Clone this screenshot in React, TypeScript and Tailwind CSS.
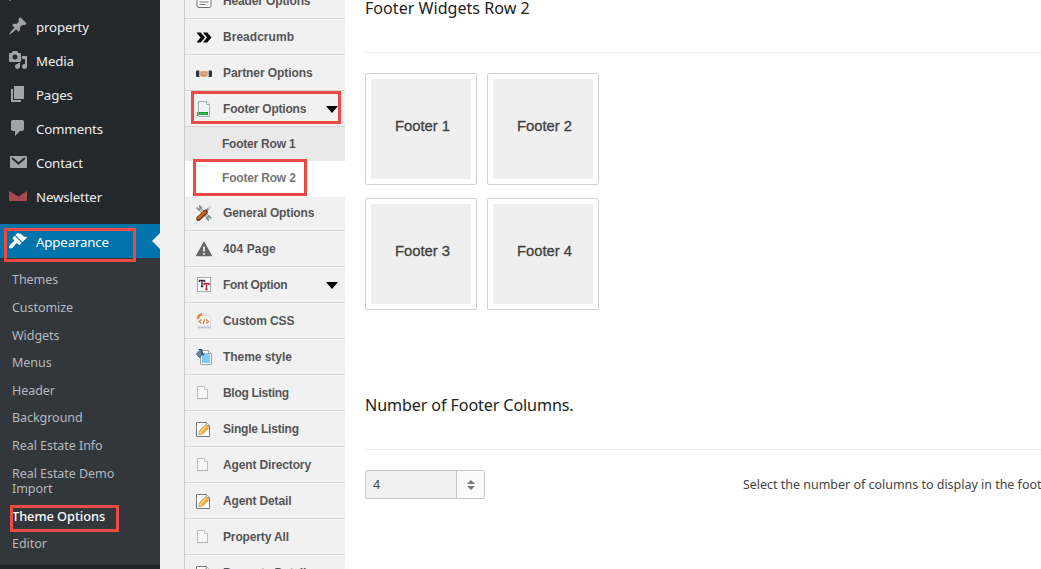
import React from "react";

type IconProps = { children: React.ReactNode; size?: number };

function Glyph({ children, size = 20 }: IconProps) {
  return (
    <svg width={size} height={size} viewBox={`0 0 ${size} ${size}`} className="block shrink-0">
      {children}
    </svg>
  );
}

const PinIcon = () => (
  <Glyph>
    <path fill="#a0a5aa" d="M10.440 3.020l1.820-1.820 6.360 6.350-1.830 1.820c-1.050-.68-2.480-.57-3.410.36l-.75.75c-.92.930-1.040 2.350-.35 3.410l-1.830 1.820-2.410-2.410-2.800 2.790c-.42.420-3.380 2.710-3.800 2.290s1.860-3.390 2.280-3.810l2.790-2.790L4.100 9.360l1.830-1.820c1.050.690 2.480.570 3.400-.36l.75-.75c.930-.92 1.050-2.350.36-3.410z" />
  </Glyph>
);
const MediaIcon = () => (
  <Glyph>
    <path fill="#a0a5aa" fillRule="evenodd" d="M13 11V4c0-.55-.45-1-1-1h-1.670L9 1H5L3.670 3H2c-.55 0-1 .45-1 1v7c0 .55.45 1 1 1h10c.55 0 1-.45 1-1zM7 4.500c1.380 0 2.500 1.120 2.500 2.500S8.380 9.500 7 9.500 4.500 8.380 4.500 7 5.620 4.500 7 4.500zM14 6h5v10.500c0 1.380-1.120 2.500-2.500 2.500S14 17.880 14 16.500s1.120-2.500 2.500-2.500c.17 0 .34.020.5.050V9h-3V6zm-4 8.050V13h2v3.500c0 1.380-1.120 2.500-2.500 2.500S7 17.880 7 16.500 8.120 14 9.500 14c.17 0 .34.020.5.050z" />
  </Glyph>
);
const PagesIcon = () => (
  <Glyph>
    <path fill="#a0a5aa" d="M6 15V2h10v13H6zm-1 1h8v2H3V5h2v11z" />
  </Glyph>
);
const CommentIcon = () => (
  <Glyph>
    <path fill="#a0a5aa" d="M5 2h9c1.100 0 2 .9 2 2v7c0 1.100-.9 2-2 2h-2l-5 5v-5H5c-1.100 0-2-.9-2-2V4c0-1.100.9-2 2-2z" />
  </Glyph>
);
const MailIcon = () => (
  <Glyph>
    <rect x="2" y="4" width="17" height="12" rx="1" fill="#a0a5aa" />
    <path d="M4 6l6.500 5.500L17 6" fill="none" stroke="#23282d" strokeWidth="2" />
  </Glyph>
);
const NewsletterIcon = () => (
  <Glyph>
    <path fill="#a9484c" d="M1 5l9.500 5.500L19 5v10H1z" />
  </Glyph>
);
const BrushIcon = () => (
  <Glyph>
    <path fill="#fff" d="M14.480 11.060L7.410 3.990l1.500-1.500c.5-.56 2.300-.47 3.510.32 1.210.8 1.430 1.280 2.910 2.100 1.180.640 2.450 1.260 4.450.850zm-.71.710L6.700 4.700 4.930 6.470c-.39.390-.39 1.020 0 1.410l1.060 1.060c.39.390.39 1.030 0 1.420-.6.600-1.430 1.110-2.210 1.690-.35.260-.7.530-1.010.840C1.430 14.230.4 16.080 1.400 17.070c.990 1 2.840-.03 4.180-1.360.310-.31.580-.66.850-1.020.570-.78 1.080-1.610 1.690-2.210.390-.39 1.020-.39 1.410 0l1.060 1.060c.390.390 1.020.390 1.410 0z" />
  </Glyph>
);

const HeaderIcon = () => (
  <Glyph size={16}>
    <rect x="1" y="0.500" width="14" height="14" rx="2" fill="#fafafa" stroke="#707070" />
    <path d="M3.500 4h9M3.500 6.500h9M3.500 9h9M3.500 11.500h6" stroke="#777" />
  </Glyph>
);
const ChevronsIcon = () => (
  <Glyph size={16}>
    <path fill="#080808" d="M.5 3.500h4.200L9 8.500l-4.300 5H.5l4-5zM7 3.500h4.200l4.300 5-4.300 5H7l4-5z" />
  </Glyph>
);
const HandshakeIcon = () => (
  <Glyph size={16}>
    <rect x="0" y="5.500" width="3.500" height="6.500" rx="1" fill="#30343a" />
    <rect x="12.500" y="5.500" width="3.500" height="6.500" rx="1" fill="#30343a" />
    <path fill="#aeb5bc" d="M3 6h1.500v5.500H3zM11.500 6H13v5.500h-1.500z" />
    <path fill="#d99a68" d="M4.500 6.500l3-.5 4 .5V11L9 12H7l-2.500-1z" />
    <path d="M6 8l3 .3 2 1.500" stroke="#f0bd93" fill="none" />
  </Glyph>
);
const FooterIcon = () => (
  <Glyph size={16}>
    <path fill="#edf4f3" stroke="#a3b1af" d="M2.500.5h8l3 3v12h-11z" />
    <path fill="#fff" stroke="#a3b1af" d="M10.500.5v3h3" />
    <rect x="3.500" y="11.500" width="8" height="2" fill="#46c653" stroke="#179c2b" />
    <path d="M1.500 11v4" stroke="#2baa3a" />
  </Glyph>
);
const ToolsIcon = () => (
  <Glyph size={16}>
    <path d="M3 3l10 10" stroke="#819292" strokeWidth="3.400" />
    <path d="M3 3l10 10" stroke="#c9d4d3" strokeWidth="1.800" />
    <path d="M.8 2.500L3 5 5.300 2.800 3 .6M15.200 13.500L13 11l-2.300 2.200L13 15.400" fill="none" stroke="#819292" strokeWidth="1.800" />
    <path d="M14.500 1.500L8 8" stroke="#8a9696" strokeWidth="2.200" />
    <path d="M14.800 1.200L12.500 3.500" stroke="#dce5e5" strokeWidth="1.800" />
    <path d="M9.500 7L2.500 13.700" stroke="#74320e" strokeWidth="4.500" strokeLinecap="round" />
    <path d="M9 7L2.500 13.200" stroke="#cf6727" strokeWidth="2.400" strokeLinecap="round" />
  </Glyph>
);
const WarningIcon = () => (
  <Glyph size={16}>
    <path fill="#666" stroke="#666" strokeWidth="1.500" strokeLinejoin="round" d="M8 1.500l7.200 13H.8z" />
    <path d="M8 5.500v5M8 12v1.800" stroke="#eee" strokeWidth="1.800" />
  </Glyph>
);
const FontIcon = () => (
  <Glyph size={16}>
    <rect x="1.500" y="0.500" width="13" height="14" fill="#fff" stroke="#aaa" />
    <path d="M3 3.500h6M3.500 3v2M8.500 3v2M6 3v7M4.800 9.500h2.400" stroke="#333" strokeWidth="1.400" fill="none" />
    <path d="M7.500 6.500h6M8 6v2M13 6v2M10.500 6v7M9.200 12.500h2.600" stroke="#bf2436" strokeWidth="1.400" fill="none" />
  </Glyph>
);
const CssIcon = () => (
  <Glyph size={16}>
    <path fill="#dedee6" d="M1.500 2H12l3 2.500v10H1.500z" />
    <path fill="#f8f8fa" d="M2 3h9.500L14 5v7.500H2z" />
    <path d="M2 14.800h12.500" stroke="#b4b4c0" />
    <path fill="#e5842a" d="M.5 5.500C1 2.500 3.500 0 6.500.2L5.500 2.800C3.800 3 3.500 4.500 3.200 6z" />
    <path d="M5.500 6.500l-2.500 2 2.500 2M10 6.500l2.500 2-2.500 2M8.600 6.300l-1.500 4.400" stroke="#e8792c" strokeWidth="1.200" fill="none" />
  </Glyph>
);
const StyleIcon = () => (
  <Glyph size={16}>
    <path fill="#f5fafe" stroke="#9ba3aa" d="M4.500 1.500h8l3 3v11h-11z" />
    <path fill="#83c8f7" d="M6 4h6l2 2v8H6z" />
    <path fill="#fff" stroke="#9ba3aa" d="M12.500 1.500v3h3" />
    <path fill="#708ba2" stroke="#31536d" d="M.5 5L4 1.500l3 3-3.500 4z" />
    <path d="M3 1c2-2 3.500 0 3 4l2 1" fill="none" stroke="#284860" strokeWidth="1.300" />
  </Glyph>
);
const PageIcon = () => (
  <Glyph size={16}>
    <path fill="#f7f7f7" stroke="#bdbdbd" d="M1.500 1.500h7l3 3v9h-10z" />
    <path fill="#fff" stroke="#c5c5c5" d="M8.500 1.500v3h3" />
    <path d="M1.500 13.500h10" stroke="#aaa" />
  </Glyph>
);
const EditIcon = () => (
  <Glyph size={16}>
    <path fill="#fcfcfc" stroke="#777" d="M.5 1.500h10l3 3v11H.5z" />
    <path d="M10.500 1.500v3h3" fill="#fff" stroke="#999" />
    <path fill="#f3ac32" stroke="#b77823" strokeWidth=".7" d="M3.500 10L10 3.500 13 6.500 6.500 13 3 13.700z" />
    <path d="M5 10.500L11 4.800" stroke="#ffe083" strokeWidth="1.200" />
    <path fill="#f7d9b5" d="M3.700 10.300l2.500 2.400-2.900.7z" />
  </Glyph>
);

const menu = [
  { label: "property", Icon: PinIcon },
  { label: "Media", Icon: MediaIcon },
  { label: "Pages", Icon: PagesIcon },
  { label: "Comments", Icon: CommentIcon },
  { label: "Contact", Icon: MailIcon },
  { label: "Newsletter", Icon: NewsletterIcon },
];

const submenu = ["Themes", "Customize", "Widgets", "Menus", "Header", "Background", "Real Estate Info"];

type OptionProps = {
  label: string;
  Icon: React.ComponentType;
  arrow?: boolean;
  height?: string;
  track?: string;
  marked?: boolean;
};

const options: OptionProps[] = [
  { label: "General Options", Icon: ToolsIcon, height: "h-[35px]" },
  { label: "404 Page", Icon: WarningIcon, track: "tracking-[0.1px]" },
  { label: "Font Option", Icon: FontIcon, arrow: true, track: "tracking-[-0.35px]" },
  { label: "Custom CSS", Icon: CssIcon },
  { label: "Theme style", Icon: StyleIcon, track: "tracking-[-0.05px]" },
  { label: "Blog Listing", Icon: PageIcon, track: "tracking-[-0.3px]" },
  { label: "Single Listing", Icon: EditIcon, track: "tracking-[-0.2px]" },
  { label: "Agent Directory", Icon: PageIcon },
  { label: "Agent Detail", Icon: EditIcon },
  { label: "Property All", Icon: PageIcon },
  { label: "Property Detail", Icon: EditIcon },
];

function Option({ label, Icon, arrow, height = "h-9", track = "tracking-[-0.14px]", marked }: OptionProps) {
  return (
    <div className={`relative flex shrink-0 items-center border-b border-[#d2d2d2] pl-[11px] shadow-[inset_0_1px_0_#f9f9f9] ${height}`}>
      <Icon />
      <span className={`ml-[11px] whitespace-nowrap ${track}`}>{label}</span>
      {arrow && <span className="ml-auto mr-[7px] mt-px border-x-[6px] border-t-[7px] border-x-transparent border-t-black" />}
      {marked && <span className="absolute left-[6px] top-0 h-[33px] w-[150px] border-[3px] border-[#ec4b43]" />}
    </div>
  );
}

function WidgetBox({ n }: { n: number }) {
  return (
    <div className="h-28 w-28 rounded-[2px] border border-[#d2d2d2] bg-white p-[5px]">
      <div className="flex h-full items-center justify-center bg-[#efefef] pb-[5px] pl-[3px] font-['Liberation_Sans',sans-serif] text-[14.8px] text-[#404040] [-webkit-text-stroke:0.3px_#404040]">
        Footer {n}
      </div>
    </div>
  );
}

export default function App() {
  return (
    <div className="flex h-[569px] w-[1041px] overflow-hidden bg-[#f0f0f0] font-['Noto_Sans','Open_Sans',sans-serif]">
      <aside className="flex w-40 shrink-0 flex-col bg-[#23282d] text-[13.3px] tracking-[-0.17px] text-[#eeeeee]">
        <div className="h-[10px] pl-[9px]">
          <div className="h-px w-[2px] bg-[#777]" />
        </div>
        {menu.map(({ label, Icon }) => (
          <div key={label} className="flex h-[34px] shrink-0 items-center pl-2">
            <div className="pb-[2px]"><Icon /></div>
            <span className="ml-2 pt-[2px]">{label}</span>
          </div>
        ))}
        <div className="relative mt-[10px] flex h-[34px] shrink-0 items-center bg-[#0073aa] pl-2 text-white">
          <BrushIcon />
          <span className="ml-2 pt-[3px]">Appearance</span>
          <span className="ml-auto border-y-8 border-r-8 border-y-transparent border-r-[#f0f0f0]" />
          <span className="absolute left-1 top-[4px] h-[34px] w-[132px] border-[3px] border-[#ec4b43]" />
        </div>
        <div className="flex h-[307px] shrink-0 flex-col bg-[#32373c] pl-3 pt-[8.9px] text-[12.5px] tracking-[-0.05px] text-[#b4b9be]">
          {submenu.map((label) => (
            <div key={label} className="flex h-[27.6px] shrink-0 items-center">{label}</div>
          ))}
          <div className="flex h-[42.5px] w-[125px] shrink-0 items-center leading-[15px]">Real Estate Demo Import</div>
          <div className="relative flex h-[27.6px] shrink-0 items-center text-[12.8px] font-medium text-white">
            <span className="pt-px">Theme Options</span>
            <span className="absolute -left-[2px] top-[2px] h-[27px] w-[109px] border-[3px] border-[#ec4b43]" />
          </div>
          <div className="flex h-[27px] shrink-0 items-center pt-[1.5px]">Editor</div>
        </div>
        <div className="h-1 bg-[#20252a]" />
      </aside>

      <nav className="ml-6 flex w-[161px] shrink-0 flex-col overflow-hidden border-l border-[#cccccc] bg-[#f1f1f1] font-['Liberation_Sans',sans-serif] text-[12px] font-bold text-[#555555]">
        <div className="-mt-[17px] flex shrink-0 flex-col">
          <Option label="Header Options" Icon={HeaderIcon} />
          <Option label="Breadcrumb" Icon={ChevronsIcon} track="tracking-[0.03px]" />
          <Option label="Partner Options" Icon={HandshakeIcon} track="tracking-[-0.07px]" />
          <Option label="Footer Options" Icon={FooterIcon} arrow marked track="tracking-[-0.2px]" />
        </div>
        <div className="flex h-[34px] shrink-0 items-center bg-[#e9e9e9] pl-[37px] tracking-[-0.22px]">Footer Row 1</div>
        <div className="relative flex h-[35px] shrink-0 items-center bg-white pb-[2px] pl-[37px] tracking-[-0.2px] text-[#777777]">
          Footer Row 2
          <span className="absolute -top-[2px] left-2 h-[37px] w-[114px] border-[3px] border-[#ec4b43]" />
        </div>
        {options.map((o) => (
          <Option key={o.label} {...o} />
        ))}
      </nav>

      <main className="flex min-w-0 flex-1 flex-col overflow-hidden bg-white pl-5 text-[#222222]">
        <h2 className="-mt-[4px] h-[57px] shrink-0 border-b border-[#eeeeee] text-[16.1px] leading-6">Footer Widgets Row 2</h2>
        <div className="mt-[20px] grid w-[234px] grid-cols-2 gap-x-[10px] gap-y-[13px]">
          {[1, 2, 3, 4].map((n) => (
            <WidgetBox key={n} n={n} />
          ))}
        </div>
        <h2 className="mt-[83px] h-[57px] shrink-0 border-b border-[#eeeeee] text-[16.1px] leading-6 tracking-[-0.1px]">Number of Footer Columns.</h2>
        <div className="mt-[20px] flex items-center text-[12.5px] text-[#444444]">
          <div className="flex h-[29px] w-[120px] shrink-0 overflow-hidden rounded-[2px] border border-[#c8c8c8] bg-[#f0f0f0]">
            <span className="flex flex-1 items-center pl-[7px] pt-[2px]">4</span>
            <span className="flex w-7 flex-col items-center justify-center gap-[2px] border-l border-[#c8c8c8] bg-[#fafafa]">
              <span className="border-x-4 border-b-4 border-x-transparent border-b-[#777]" />
              <span className="border-x-4 border-t-4 border-x-transparent border-t-[#777]" />
            </span>
          </div>
          <p className="ml-[258px] whitespace-nowrap pt-[2px] tracking-[-0.02px]">Select the number of columns to display in the foot</p>
        </div>
      </main>
    </div>
  );
}
